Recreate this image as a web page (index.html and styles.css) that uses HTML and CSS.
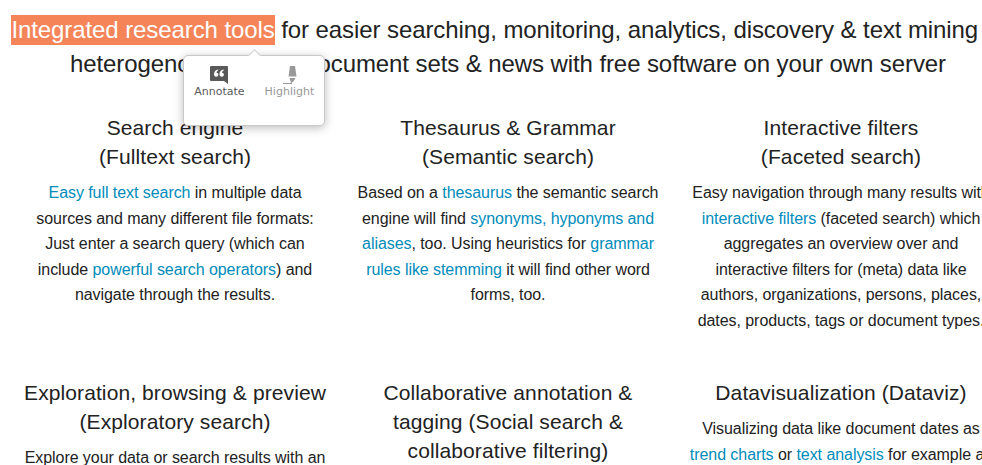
FILE: index.html
```html
<!DOCTYPE html>
<html lang="en"><head><meta charset="utf-8"><title>Integrated research tools</title><link rel="stylesheet" href="styles.css"></head>
<body>
<main class="page">
<h1 class="intro"><span class="selected">Integrated research tools<span class="popup"><span class="action"><svg width="18" height="18" viewBox="0 0 18 18"><path fill="#595959" d="M0 1Q0 0 1 0H17Q18 0 18 1V18L14 15H1Q0 15 0 14z"/><path fill="#fff" d="M8.300 3.500C5.500 4 4 5.700 4 8.200C4 9.800 4.800 10.700 6.200 10.700C7.500 10.700 8.400 9.900 8.400 8.700C8.400 7.600 7.700 6.800 6.500 6.700C6.700 5.500 7.300 4.700 8.300 4.200zM13.800 3.500C11 4 9.500 5.700 9.500 8.200C9.500 9.800 10.300 10.700 11.700 10.700C13 10.700 13.900 9.900 13.900 8.700C13.900 7.600 13.200 6.800 12 6.700C12.200 5.500 12.800 4.700 13.800 4.200z"/></svg>Annotate</span><span class="action muted"><svg width="18" height="18" viewBox="0 0 18 18"><path fill="#999" d="M10 0h5l1.500 10.500h-8zM9.500 12h6l-2 3.500-2.500 1.500zM3 17h9v1H3z"/></svg>Highlight</span></span></span> for easier searching, monitoring, analytics, discovery &amp; text mining of<br>heterogenous &amp; large document sets &amp; news with free software on your own server</h1>
<div class="grid">
<section><h2>Search engine<br>(Fulltext search)</h2><p><a>Easy full text search</a> in multiple data<br>sources and many different file formats:<br>Just enter a search query (which can<br>include <a>powerful search operators</a>) and<br>navigate through the results.</p></section>
<section><h2>Thesaurus &amp; Grammar<br>(Semantic search)</h2><p>Based on a <a>thesaurus</a> the semantic search<br>engine will find <a>synonyms, hyponyms and<br>aliases</a>, too. Using heuristics for <a>grammar<br>rules like stemming</a> it will find other word<br>forms, too.</p></section>
<section><h2>Interactive filters<br>(Faceted search)</h2><p>Easy navigation through many results with<br><a>interactive filters</a> (faceted search) which<br>aggregates an overview over and<br>interactive filters for (meta) data like<br>authors, organizations, persons, places,<br>dates, products, tags or document types.</p></section>
<section><h2>Exploration, browsing &amp; preview<br>(Exploratory search)</h2><p>Explore your data or search results with an</p></section>
<section><h2>Collaborative annotation &amp;<br>tagging (Social search &amp;<br>collaborative filtering)</h2></section>
<section><h2>Datavisualization (Dataviz)</h2><p>Visualizing data like document dates as<br><a>trend charts</a> or <a>text analysis</a> for example as</p></section>
</div></main></body></html>
```
FILE: styles.css
```css
*{box-sizing:border-box}
body{margin:0;background:#fff;color:#222;font-family:"Liberation Sans",Arial,sans-serif;overflow:hidden}
.page{width:1016px;height:465px;overflow:hidden}
.intro{margin:0;padding-top:13px;height:113px;font-size:24px;font-weight:400;line-height:34px;text-align:center;white-space:nowrap;letter-spacing:-.09px}
.selected{position:relative;background:#f58559;color:#fff;padding:1px 0 2px}
.popup{position:absolute;left:172px;top:40px;width:142px;height:71px;display:flex;background:#fff;border:1px solid #c8c8c8;border-radius:5px;box-shadow:0 2px 10px #0004;color:#595959;font:11px/12px "DejaVu Sans",sans-serif;letter-spacing:0}
.popup::before{content:"";position:absolute;left:66px;top:-5px;width:8px;height:8px;background:#fff;border:solid #ccc;border-width:1px 0 0 1px;transform:rotate(45deg)}
.action{flex:1;display:flex;flex-direction:column;align-items:center;padding-top:10px;gap:2px}
.muted{color:#999}
.grid{display:grid;grid-template-columns:repeat(3,333px);grid-template-rows:265px auto;padding-left:8.500px}
section{text-align:center;white-space:nowrap}
h2{margin:0;font-size:21px;line-height:29px;font-weight:400;letter-spacing:.1px}
p{margin:9px 0 0;font-size:16px;line-height:25.6px;letter-spacing:-.06px}
a{color:#008cba}
```
